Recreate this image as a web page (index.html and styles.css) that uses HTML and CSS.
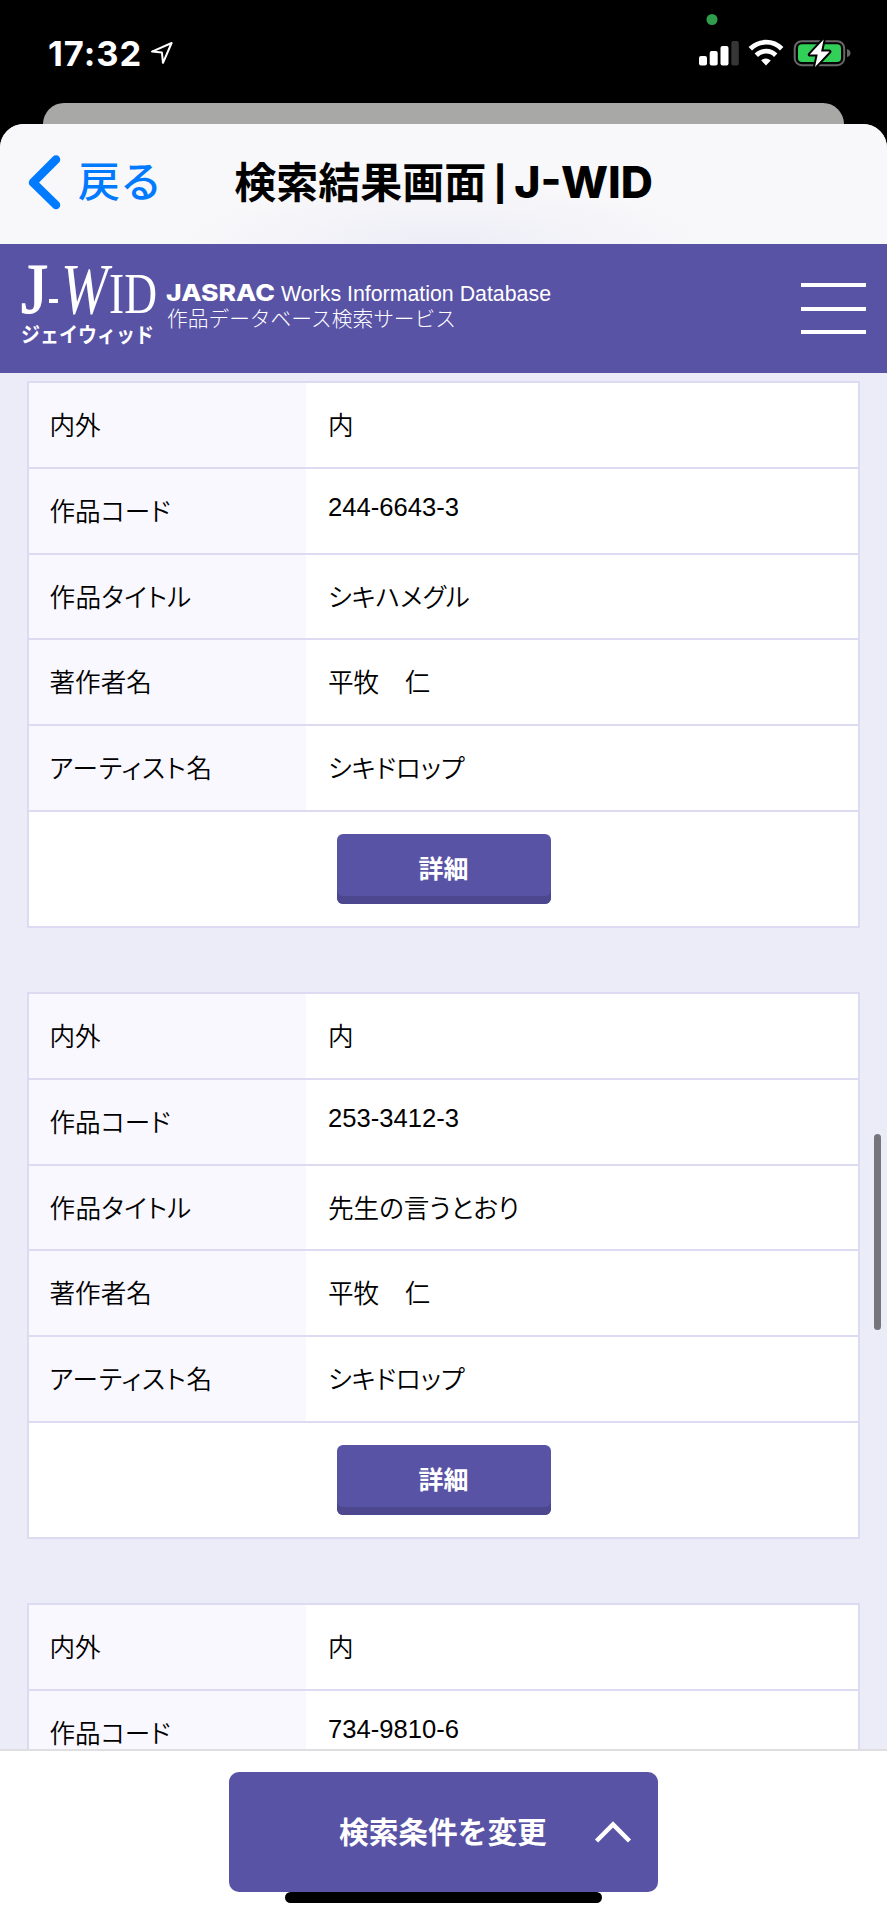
FILE: index.html
```html
<!DOCTYPE html>
<html lang="ja">
<head>
<meta charset="UTF-8">
<meta name="viewport" content="width=device-width, initial-scale=1.0">
<title>検索結果画面 | J-WID</title>
<link rel="stylesheet" href="styles.css">
</head>

<body>
<div class="phone">

<div class="status">
  <div class="clock"><span>17:32</span>
    <svg width="24" height="24" viewBox="0 0 24 24"><path d="M2 10.6 21.6 2 13 21.8 11.9 11.5Z" fill="none" stroke="#fff" stroke-width="2" stroke-linejoin="round"/></svg>
  </div>
  <svg class="signals" width="154" height="60" viewBox="0 0 154 60">
    <circle cx="14" cy="9.5" r="5.5" fill="#2f9e4c"/>
    <rect x="1" y="46" width="8" height="9.5" rx="2" fill="#fff"/>
    <rect x="11.7" y="41" width="8" height="14.5" rx="2" fill="#fff"/>
    <rect x="22.5" y="36" width="8" height="19.5" rx="2" fill="#fff"/>
    <rect x="33.3" y="31" width="7.5" height="24.5" rx="2" fill="#363636"/>
    <g fill="none" stroke="#fff" stroke-width="4.8">
      <path d="M52.3 38.8a22 22 0 0 1 31.4 0"/>
      <path d="M58.3 45.2a13.8 13.8 0 0 1 19.4 0"/>
    </g>
    <path d="M63.2 50.4q4.8-3.8 9.6 0l-4.8 5Z" fill="#fff"/>
    <rect x="96.7" y="31.2" width="49.5" height="24" rx="7" fill="none" stroke="#686868" stroke-width="2"/>
    <rect x="100" y="34.3" width="43" height="17.8" rx="4" fill="#32d058"/>
    <path d="M149 39q3.500 1 3.500 4t-3.500 4Z" fill="#686868"/>
    <path d="M125.700 29.5 111.700 44.6h8L117 57 131.500 41.6h-8.4Z" fill="#fff" stroke="#000" stroke-width="4" stroke-linejoin="round" paint-order="stroke"/>
  </svg>
</div>
<div class="back-card"></div>

<div class="sheet">

<div class="navbar">
  <div class="back">
    <svg width="34" height="56" viewBox="0 0 34 56"><path d="M29 5.5 6 28.500l23 22.500" fill="none" stroke="#007aff" stroke-width="8.5" stroke-linecap="round" stroke-linejoin="round"/></svg>
    <span>戻る</span>
  </div>
  <h1>検索結果画面<span class="bar"> | </span><span class="latin">J-WID</span></h1>
</div>

<header>
  <svg class="logo" width="560" height="129" viewBox="0 0 560 129">
    <g class="logo-serif">
      <text class="logo-j" x="21" y="69" font-size="71" textLength="27" lengthAdjust="spacingAndGlyphs">J</text>
      <text x="61" y="69" font-size="71" font-style="italic" textLength="47" lengthAdjust="spacingAndGlyphs">W</text>
      <text x="109" y="69" font-size="58" textLength="48" lengthAdjust="spacingAndGlyphs">ID</text>
    </g>
    <rect x="49" y="55" width="9" height="4" fill="#fff"/>
    <text class="logo-kana" x="21" y="98" textLength="133" lengthAdjust="spacingAndGlyphs">ジェイウィッド</text>
    <text class="logo-jasrac" x="166" y="57" textLength="109" lengthAdjust="spacingAndGlyphs">JASRAC</text>
    <text class="logo-en" x="281" y="57" textLength="270" lengthAdjust="spacingAndGlyphs">Works Information Database</text>
    <text class="logo-ja" x="167" y="82" textLength="289" lengthAdjust="spacingAndGlyphs">作品データベース検索サービス</text>
  </svg>
  <div class="menu"><i></i><i></i><i></i></div>
</header>

<main>
  <div class="work">
    <dl><dt>内外</dt><dd>内</dd></dl>
    <dl><dt>作品コード</dt><dd class="code">244-6643-3</dd></dl>
    <dl><dt class="title">作品タイトル</dt><dd>シキハメグル</dd></dl>
    <dl><dt>著作者名</dt><dd>平牧　仁</dd></dl>
    <dl><dt class="artist">アーティスト名</dt><dd>シキドロップ</dd></dl>
    <div class="action"><button>詳細</button></div>
  </div>

  <div class="work">
    <dl><dt>内外</dt><dd>内</dd></dl>
    <dl><dt>作品コード</dt><dd class="code">253-3412-3</dd></dl>
    <dl><dt class="title">作品タイトル</dt><dd>先生の言うとおり</dd></dl>
    <dl><dt>著作者名</dt><dd>平牧　仁</dd></dl>
    <dl><dt class="artist">アーティスト名</dt><dd>シキドロップ</dd></dl>
    <div class="action"><button>詳細</button></div>
  </div>

  <div class="work">
    <dl><dt>内外</dt><dd>内</dd></dl>
    <dl><dt>作品コード</dt><dd class="code">734-9810-6</dd></dl>
  </div>
</main>

<footer>
  <button class="change">
    <span>検索条件を変更</span>
    <svg width="38" height="24" viewBox="0 0 38 24"><path d="M2.5 21 19 4.5 35.5 21" fill="none" stroke="#fff" stroke-width="4.5"/></svg>
  </button>
</footer>

</div>

<div class="scrollbar"></div>
<div class="home-bar"></div>
</div>
</body>
</html>
```

FILE: styles.css
```css
* {
    box-sizing: border-box;
}

body {
    margin: 0;
    background: #fff;
    color: #000;
    font-family: "Liberation Sans", "Noto Sans CJK JP", sans-serif;
}

.phone {
    position: relative;
    display: flex;
    flex-direction: column;
    width: 887px;
    height: 1920px;
    overflow: hidden;
    background: #000;
}

.status {
    display: flex;
    justify-content: space-between;
    height: 103px;
    padding: 10px 35px 0 48px;
}

.clock {
    display: flex;
    align-items: center;
    gap: 8px;
    height: 86px;
    color: #fff;
    font-family: Inter, sans-serif;
    font-size: 34.5px;
    font-weight: 700;
    letter-spacing: 1px;
}

.back-card {
    height: 21px;
    margin: 0 43px;
    border-radius: 21px 21px 0 0;
    background: #a8a8a7;
}

.sheet {
    flex: 1;
    display: flex;
    flex-direction: column;
    min-height: 0;
    overflow: hidden;
    border-radius: 24px 24px 0 0;
    background: #fff;
}

.navbar {
    display: grid;
    grid-template-columns: 1fr auto 1fr;
    align-items: center;
    height: 120px;
    padding: 0 27px 5px 27px;
    background: radial-gradient(ellipse 260px 60px at 50% 100%, #ededf7, #f8f8fa);
}

.back {
    display: flex;
    align-items: center;
    gap: 17px;
    color: #007aff;
    font-family: "Noto Sans CJK JP", sans-serif;
    font-size: 42px;
    font-weight: 500;
    line-height: 56px;
}

.back span {
    padding-bottom: 5px;
}

h1 {
    margin: 0;
    color: #000;
    font-family: "Noto Sans CJK JP", sans-serif;
    font-size: 42px;
    font-weight: 700;
    line-height: 60px;
    white-space: nowrap;
}

h1 .bar {
    font-family: Inter, sans-serif;
    font-size: 34px;
    font-weight: 800;
    vertical-align: 2px;
}

h1 .latin {
    font-family: Inter, sans-serif;
    font-size: 44.5px;
    font-weight: 800;
}

header {
    display: flex;
    align-items: center;
    justify-content: space-between;
    height: 129px;
    padding-right: 21px;
    background: #5953a6;
}

.logo {
    fill: #fff;
}

.logo-serif {
    font-family: "Liberation Serif", serif;
}

.logo-j {
    stroke: #fff;
    stroke-width: 1.2px;
}

.logo-kana {
    font-family: "Noto Sans CJK JP", sans-serif;
    font-size: 21px;
    font-weight: 700;
}

.logo-jasrac {
    font-family: Inter, sans-serif;
    font-size: 23.5px;
    font-weight: 800;
}

.logo-en {
    font-size: 22px;
}

.logo-ja {
    font-family: "Noto Sans CJK JP", sans-serif;
    font-size: 21px;
    font-weight: 300;
}

.menu {
    display: flex;
    flex-direction: column;
    gap: 19.5px;
    width: 65px;
}

.menu i {
    height: 4px;
    background: #fff;
}

main {
    flex: 1;
    display: flex;
    flex-direction: column;
    gap: 64.5px;
    min-height: 0;
    overflow: hidden;
    padding: 8.3px 27px 0;
    background: #ecebf8;
}

.work {
    flex-shrink: 0;
    border: 2px solid #dddbf2;
    background: #fff;
}

dl {
    display: flex;
    height: 85.7px;
    margin: 0;
    border-bottom: 2px solid #dddbf2;
    font-family: "Noto Sans CJK JP", sans-serif;
    font-size: 25.6px;
    font-weight: 350;
    font-feature-settings: "palt";
    line-height: 82px;
}

dt {
    width: 277px;
    padding-left: 20.5px;
    background: #f9f8ff;
}

dt.title {
    letter-spacing: 0.4px;
}

dt.artist {
    letter-spacing: 0.9px;
}

dd {
    margin: 0;
    padding-left: 22px;
}

.code {
    font-family: "Liberation Sans", sans-serif;
    font-weight: 400;
    line-height: 77px;
}

.action {
    display: flex;
    justify-content: center;
    height: 114px;
    padding-top: 22px;
}

button {
    border: none;
    background: #5953a6;
    color: #fff;
    font-family: "Noto Sans CJK JP", sans-serif;
    font-weight: 700;
}

.action button {
    width: 214px;
    height: 70px;
    padding: 0 0 3px;
    border-radius: 6px;
    box-shadow: inset 0 -8px #4c478e;
    font-size: 25px;
}

footer {
    display: flex;
    justify-content: center;
    align-items: flex-start;
    height: 171px;
    padding-top: 21px;
    border-top: 2px solid #dfdfe1;
    background: #fff;
}

.change {
    display: flex;
    align-items: center;
    justify-content: space-between;
    width: 429px;
    height: 120px;
    padding: 0 26px 0 110px;
    border-radius: 10px;
    font-size: 29.7px;
}

.change span {
    padding-bottom: 4px;
}

/* overlays */
.scrollbar {
    position: absolute;
    top: 1134px;
    right: 6px;
    width: 7px;
    height: 196px;
    border-radius: 4px;
    background: #76757c;
}

.home-bar {
    position: absolute;
    bottom: 17px;
    left: 285px;
    width: 317px;
    height: 11px;
    border-radius: 6px;
    background: #000;
}
```
